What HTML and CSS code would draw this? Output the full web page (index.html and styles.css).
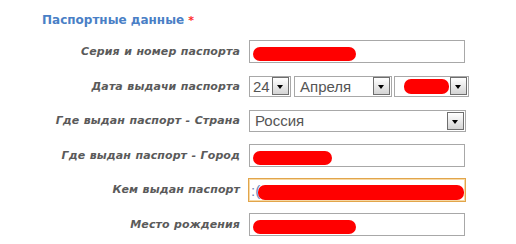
FILE: index.html
```html
<!DOCTYPE html>
<html lang="ru">
<head>
  <meta charset="UTF-8">
  <title>Паспортные данные</title>
  <link rel="stylesheet" href="styles.css">
</head>
<body>
  <div class="form">
    <h2 class="section-title">Паспортные данные <span class="req">*</span></h2>

    <div class="rows">
      <label class="lbl">Серия и номер паспорта</label>
      <div class="cell">
        <div class="field"><span class="redact r-series"></span></div>
      </div>

      <label class="lbl">Дата выдачи паспорта</label>
      <div class="cell date">
        <div class="select sel-day"><span class="val">24</span><span class="arrow"></span></div>
        <div class="select sel-month"><span class="val">Апреля</span><span class="arrow"></span></div>
        <div class="select sel-year"><span class="redact r-year"></span><span class="arrow"></span></div>
      </div>

      <label class="lbl">Где выдан паспорт - Страна</label>
      <div class="cell">
        <div class="select sel-country"><span class="val">Россия</span><span class="arrow"></span></div>
      </div>

      <label class="lbl">Где выдан паспорт - Город</label>
      <div class="cell">
        <div class="field"><span class="redact r-city"></span></div>
      </div>

      <label class="lbl">Кем выдан паспорт</label>
      <div class="cell">
        <div class="field focused"><span class="hint">:(</span><span class="redact r-issuer"></span></div>
      </div>

      <label class="lbl">Место рождения</label>
      <div class="cell">
        <div class="field"><span class="redact r-birth"></span></div>
      </div>
    </div>
  </div>
</body>
</html>
```

FILE: styles.css
```css
body {
  margin: 0;
  background: #ffffff;
  font-family: "DejaVu Sans", Verdana, sans-serif;
}

.form {
  padding-top: 12px;
}

.section-title {
  margin: 0 0 11px 42px;
  font-size: 12px;
  line-height: 16px;
  font-weight: bold;
  color: #4a7fc6;
}

.req {
  color: #ff2a2a;
  font-size: 11px;
}

.rows {
  display: grid;
  grid-template-columns: 240px 270px;
  grid-auto-rows: 23px;
  column-gap: 9px;
  row-gap: 11.6px;
}

.lbl {
  display: flex;
  align-items: center;
  justify-content: flex-end;
  font-size: 11px;
  font-weight: bold;
  font-style: italic;
  letter-spacing: 0.1px;
  word-spacing: 0.5px;
  color: #5a5a5a;
  white-space: nowrap;
}

.cell {
  display: flex;
  align-items: center;
}

.field {
  display: flex;
  align-items: center;
  box-sizing: border-box;
  width: 216px;
  height: 23px;
  padding: 2px 3px 0 3px;
  border: 1px solid #a8a8a8;
  background: #fff;
}

.field.focused {
  width: 218px;
  height: 24px;
  margin-left: -1px;
  border-color: #e2a54a;
  box-shadow: inset 0 0 0 1px #f6d9a6;
  padding-left: 2px;
}

.hint {
  flex-shrink: 0;
  white-space: nowrap;
  font-family: "Liberation Sans", Arial, sans-serif;
  font-size: 15px;
  line-height: 15px;
  color: #6b86b8;
  margin-right: -2px;
}

.redact {
  display: inline-block;
  flex-shrink: 0;
  height: 14px;
  border-radius: 7px;
  background: #ff0000;
}

.r-series { width: 103px; margin-top: 2px; }
.r-city { width: 79px; margin-top: 3px; }
.r-issuer { width: 206px; height: 15px; margin-top: 3px; }
.r-birth { width: 103px; margin-top: 4px; }
.r-year { width: 45px; height: 15px; margin: 1px 0 0 6px; }

.date {
  gap: 3px;
}

.select {
  display: flex;
  align-items: center;
  box-sizing: border-box;
  height: 21px;
  padding: 0 1px 0 3px;
  border: 1px solid #a8a8a8;
  background: #fff;
  font-family: "Liberation Sans", Arial, sans-serif;
  font-size: 15px;
  color: #555;
}

.select .val {
  flex: 1;
}

.sel-day { width: 42px; }
.sel-month { width: 98px; padding-left: 5px; }
.sel-year { width: 75px; margin-left: -1px; }
.sel-country { width: 217px; height: 22px; padding-right: 1px; padding-left: 5px; }

.arrow {
  position: relative;
  box-sizing: border-box;
  width: 17px;
  height: 18px;
  margin-left: auto;
  border: 1px solid #6e6e6e;
  background: linear-gradient(#ffffff, #d4d4d4);
}

.arrow::after {
  content: "";
  position: absolute;
  left: 4px;
  top: 7px;
  border-left: 3.5px solid transparent;
  border-right: 3.5px solid transparent;
  border-top: 4px solid #000;
}
```
